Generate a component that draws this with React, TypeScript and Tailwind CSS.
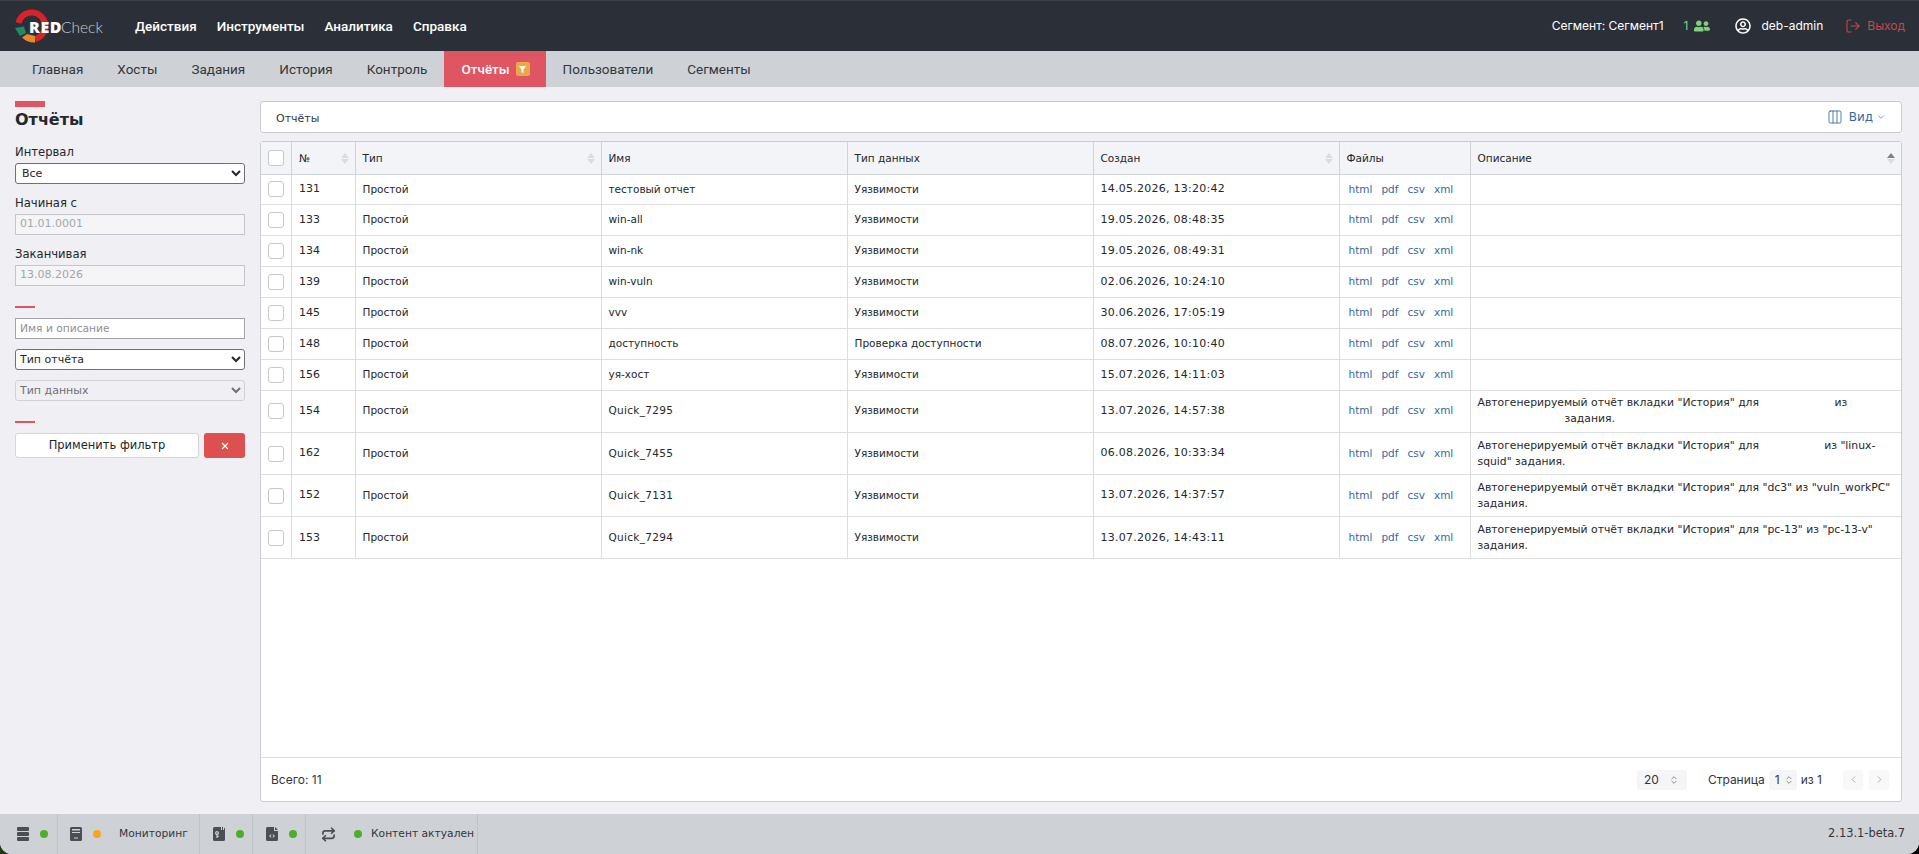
import { ChevronDown, ChevronLeft, ChevronRight, ChevronsUpDown, Columns3, LogOut, Repeat, X } from 'lucide-react';
import { FaRegUserCircle, FaUserFriends } from 'react-icons/fa';

const TOP_MENU = ['Действия', 'Инструменты', 'Аналитика', 'Справка'];
const TABS = ['Главная', 'Хосты', 'Задания', 'История', 'Контроль', 'Отчёты', 'Пользователи', 'Сегменты'];

type Report = {
  id: number;
  name: string;
  dataType?: string;
  created: string;
  desc?: [string, string];
  tall?: boolean;
  indent?: boolean;
};

const AUTO = 'Автогенерируемый отчёт вкладки "История" для';
const GAP_LONG = '\u00a0'.repeat(22);
const GAP_SHORT = '\u00a0'.repeat(19);

const REPORTS: Report[] = [
  { id: 131, name: 'тестовый отчет', created: '14.05.2026, 13:20:42' },
  { id: 133, name: 'win-all', created: '19.05.2026, 08:48:35' },
  { id: 134, name: 'win-nk', created: '19.05.2026, 08:49:31' },
  { id: 139, name: 'win-vuln', created: '02.06.2026, 10:24:10' },
  { id: 145, name: 'vvv', created: '30.06.2026, 17:05:19' },
  { id: 148, name: 'доступность', dataType: 'Проверка доступности', created: '08.07.2026, 10:10:40' },
  { id: 156, name: 'уя-хост', created: '15.07.2026, 14:11:03' },
  { id: 154, name: 'Quick_7295', created: '13.07.2026, 14:57:38', tall: true, indent: true, desc: [`${AUTO}${GAP_LONG}из`, 'задания.'] },
  { id: 162, name: 'Quick_7455', created: '06.08.2026, 10:33:34', tall: true, desc: [`${AUTO}${GAP_SHORT}из "linux-`, 'squid" задания.'] },
  { id: 152, name: 'Quick_7131', created: '13.07.2026, 14:37:57', tall: true, desc: [`${AUTO} "dc3" из "vuln_workPC"`, 'задания.'] },
  { id: 153, name: 'Quick_7294', created: '13.07.2026, 14:43:11', tall: true, desc: [`${AUTO} "pc-13" из "pc-13-v"`, 'задания.'] },
];

function Logo() {
  return (
    <div className="relative h-[36px] w-[90px] shrink-0">
      <svg viewBox="0 0 34 36" className="absolute left-0 top-0 h-[36px] w-[34px]">
        <path d="M3.500 15 A13.500 13.500 0 1 1 20 31" fill="none" stroke="#d8232a" strokeWidth="6" />
        <path d="M0 20 L9 18.500 L11 25 L5 28 Z" fill="#1e8a68" />
        <path d="M12 26 L20 28 L20 34.500 A17 17 0 0 1 7 29.500 Z" fill="#e8872e" />
      </svg>
      <span className="absolute left-[14px] top-[9px] font-['Open_Sans',sans-serif] text-[16px] font-extrabold leading-[20px] tracking-[0.6px] text-white">RED</span>
      <span className="absolute left-[46px] top-[9px] font-['Lato',sans-serif] text-[15.5px] font-light leading-[20px] text-[#c8cad0]">Check</span>
    </div>
  );
}

function SortArrows({ up }: { up?: boolean }) {
  return (
    <span className="ml-auto flex flex-col gap-[1px]">
      <span className={`h-0 w-0 border-x-[4px] border-b-[5px] border-x-transparent ${up ? 'border-b-[#7d838c]' : 'border-b-[#d9dce1]'}`} />
      <span className="h-0 w-0 border-x-[4px] border-t-[5px] border-x-transparent border-t-[#d9dce1]" />
    </span>
  );
}

function Checkbox() {
  return <span className="mx-auto block h-[16px] w-[16px] rounded-[3px] border border-[#c4c7cc] bg-white" />;
}

function HeadCell({ label, sort, up, wide }: { label: string; sort?: boolean; up?: boolean; wide?: boolean }) {
  return (
    <th className={`border-l border-[#d0d3d8] pr-[6px] pt-[2px] text-left font-normal ${wide ? 'pl-[7.5px]' : 'pl-[7px]'}`}>
      <div className="flex items-center">
        <span>{label}</span>
        {sort ? <SortArrows up={up} /> : null}
      </div>
    </th>
  );
}

function FileLinks() {
  return (
    <div className="flex gap-[9px] pl-[2px] text-[#35699c]">
      <span>html</span>
      <span>pdf</span>
      <span>csv</span>
      <span>xml</span>
    </div>
  );
}

function Sidebar() {
  return (
    <aside className="w-[260px] shrink-0 px-[15px] pt-[14px] text-[#24272b]">
      <div className="h-[6px] w-[30px] bg-[#df5561]" />
      <h1 className="mt-[1px] text-[16px] font-bold leading-[24px]">Отчёты</h1>
      <label className="mt-[11px] block text-[11.6px] leading-[18px]">Интервал</label>
      <select defaultValue="Все" className="mt-[2px] block h-[21px] w-full rounded-[3px] border border-[#6f7175] bg-white pl-[2px] text-[11px] text-[#24272b]">
        <option>Все</option>
      </select>
      <label className="mt-[10px] block text-[11.6px] leading-[18px]">Начиная с</label>
      <div className="mt-[2px] flex h-[21px] items-center border border-[#c4c6cb] bg-[#f5f5f8] px-[4px] text-[11px] text-[#a4a6ab]">01.01.0001</div>
      <label className="mt-[10px] block text-[11.6px] leading-[18px]">Заканчивая</label>
      <div className="mt-[2px] flex h-[21px] items-center border border-[#c4c6cb] bg-[#f5f5f8] px-[4px] text-[11px] text-[#a4a6ab]">13.08.2026</div>
      <div className="mt-[20px] h-[2px] w-[20px] bg-[#df5561]" />
      <input placeholder="Имя и описание" className="mt-[10px] block h-[21px] w-full border border-[#a3a5aa] bg-white px-[4px] text-[10.7px] placeholder:text-[#8e9095]" />
      <select defaultValue="Тип отчёта" className="mt-[10px] block h-[21px] w-full rounded-[3px] border border-[#6f7175] bg-white text-[11px] text-[#24272b]">
        <option>Тип отчёта</option>
      </select>
      <select disabled defaultValue="Тип данных" className="mt-[10px] block h-[21px] w-full rounded-[3px] border border-[#d0d2d6] bg-[#efeff4] text-[11px] text-[#6f7175]">
        <option>Тип данных</option>
      </select>
      <div className="mt-[20px] h-[2px] w-[20px] bg-[#df5561]" />
      <div className="mt-[10px] flex gap-[5px]">
        <button type="button" className="h-[25px] w-[184px] rounded-[3px] border border-[#d4d6da] bg-white text-[11.5px] text-[#24272b]">Применить фильтр</button>
        <button type="button" className="flex h-[25px] w-[41px] items-center justify-center rounded-[3px] bg-[#dc5050] text-white">
          <X size={10} strokeWidth={3} />
        </button>
      </div>
    </aside>
  );
}

function ReportsTable() {
  return (
    <table className="w-full table-fixed border-collapse text-[10.5px] text-[#24272b]">
      <colgroup>
        <col className="w-[30px]" />
        <col className="w-[64px]" />
        <col className="w-[246px]" />
        <col className="w-[246px]" />
        <col className="w-[246px]" />
        <col className="w-[246px]" />
        <col className="w-[131px]" />
        <col />
      </colgroup>
      <thead>
        <tr className="h-[32px] border-b border-[#d0d3d8] bg-[#f3f4f8]">
          <th className="font-normal"><Checkbox /></th>
          <HeadCell label="№" sort wide />
          <HeadCell label="Тип" sort />
          <HeadCell label="Имя" />
          <HeadCell label="Тип данных" />
          <HeadCell label="Создан" sort />
          <HeadCell label="Файлы" />
          <HeadCell label="Описание" sort up />
        </tr>
      </thead>
      <tbody>
        {REPORTS.map((r) => (
          <tr key={r.id} className={`border-b border-[#dcdee2] ${r.tall ? 'h-[42.2px]' : 'h-[30.9px]'}`}>
            <td><Checkbox /></td>
            <td className="border-l border-[#dcdee2] pl-[7.5px] pr-[7px] text-[11px]">{r.id}</td>
            <td className="border-l border-[#dcdee2] px-[7px]">Простой</td>
            <td className={`border-l border-[#dcdee2] px-[7px] ${r.tall ? 'tracking-[0.3px]' : ''}`}>{r.name}</td>
            <td className="border-l border-[#dcdee2] px-[7px]">{r.dataType ?? 'Уязвимости'}</td>
            <td className="border-l border-[#dcdee2] px-[7px] text-[11px] tracking-[0.25px]">{r.created}</td>
            <td className="border-l border-[#dcdee2] px-[7px]"><FileLinks /></td>
            <td className="border-l border-[#dcdee2] px-[7px] text-[10.8px] leading-[16px]">
              {r.desc ? (
                <>
                  <div className="whitespace-nowrap">{r.desc[0]}</div>
                  <div className={r.indent ? 'pl-[87px]' : ''}>{r.desc[1]}</div>
                </>
              ) : null}
            </td>
          </tr>
        ))}
      </tbody>
    </table>
  );
}

function Dot({ color }: { color: string }) {
  return <span className={`block h-[8px] w-[8px] shrink-0 rounded-full ${color}`} />;
}

function StatusBar() {
  return (
    <footer className="flex h-[40px] shrink-0 items-center bg-[#ced2d6] text-[10.7px] text-[#33363a]">
      <div className="flex h-full w-[58px] items-center gap-[11px] border-r border-[#bfc3c8] pl-[17px]">
        <svg viewBox="0 0 12 14" className="h-[14px] w-[12px] shrink-0 fill-[#4b4e55]">
          <rect width="12" height="4" rx="1" />
          <rect y="5" width="12" height="4" rx="1" />
          <rect y="10" width="12" height="4" rx="1" />
        </svg>
        <Dot color="bg-[#4caf2a]" />
      </div>
      <div className="flex h-full w-[142px] items-center border-r border-[#bfc3c8] pl-[12px]">
        <svg viewBox="0 0 12 14" className="h-[14px] w-[12px] shrink-0 fill-[#4b4e55]">
          <path d="M1.500 0h9A1.500 1.500 0 0 1 12 1.500v11a1.500 1.500 0 0 1-1.500 1.500h-9A1.500 1.500 0 0 1 0 12.500v-11A1.500 1.500 0 0 1 1.500 0zM2 2v1.500h8V2zM2 5v1h8V5zM4 10.500v1h4v-1z" fillRule="evenodd" />
        </svg>
        <span className="ml-[11px]"><Dot color="bg-[#f5a623]" /></span>
        <span className="ml-[18px]">Мониторинг</span>
      </div>
      <div className="flex h-full w-[53px] items-center gap-[11px] border-r border-[#bfc3c8] pl-[13px]">
        <svg viewBox="0 0 12 14" className="h-[14px] w-[12px] shrink-0 fill-[#4b4e55]">
          <path d="M1.500 0H8v3h1V0h1v3h1V.4A1.500 1.500 0 0 1 12 1.500v11a1.500 1.500 0 0 1-1.500 1.500h-9A1.500 1.500 0 0 1 0 12.500v-11A1.500 1.500 0 0 1 1.500 0zM4 4a2 2 0 0 0-.6 3.900V11h1.200V9.800H6V8.700H4.600v-.8A2 2 0 0 0 4 4zm0 1.200a.8.8 0 1 1 0 1.600.8.800 0 0 1 0-1.600z" fillRule="evenodd" />
        </svg>
        <Dot color="bg-[#4caf2a]" />
      </div>
      <div className="flex h-full w-[53px] items-center gap-[11px] border-r border-[#bfc3c8] pl-[13px]">
        <svg viewBox="0 0 12 14" className="h-[14px] w-[12px] shrink-0 fill-[#4b4e55]">
          <path d="M1.500 0H8v4h4v8.500a1.500 1.500 0 0 1-1.500 1.500h-9A1.500 1.500 0 0 1 0 12.500v-11A1.500 1.500 0 0 1 1.500 0zM9 0l3 3H9zM5 7.200 3 9l2 1.800.6-.6L4.300 9l1.300-1.200zM7 7.200l-.6.600L7.700 9l-1.300 1.200.6.600L9 9z" fillRule="evenodd" />
        </svg>
        <Dot color="bg-[#4caf2a]" />
      </div>
      <div className="flex h-full w-[172px] items-center border-r border-[#bfc3c8] pl-[15px]">
        <Repeat size={15} strokeWidth={2.8} className="shrink-0 text-[#4b4e55]" />
        <span className="ml-[18px]"><Dot color="bg-[#4caf2a]" /></span>
        <span className="ml-[9px] whitespace-nowrap">Контент актуален</span>
      </div>
      <span className="ml-auto pr-[14px] text-[11.4px]">2.13.1-beta.7</span>
    </footer>
  );
}

export default function App() {
  return (
    <div className="h-[854px] w-[1919px] overflow-hidden bg-linear-to-r from-[#1b3a12] to-black font-['DejaVu_Sans',sans-serif]">
      <div className="flex h-full flex-col overflow-hidden rounded-b-[12px] bg-[#efeff4]">
        <header className="flex h-[51px] shrink-0 items-center border-t border-[#3c4048] bg-[#2b2f38] pl-[15px] pr-[14px] font-['Inter',sans-serif] text-[12px] text-white">
          <Logo />
          <nav className="ml-[30px] flex gap-[20px] font-['Roboto',sans-serif] text-[13.5px] font-medium">
            {TOP_MENU.map((item) => (
              <span key={item}>{item}</span>
            ))}
          </nav>
          <span className="ml-auto">Сегмент: Сегмент1</span>
          <span className="ml-[20px] text-[#7fd07f]">1</span>
          <FaUserFriends size={16} className="ml-[6px] text-[#7fd07f]" />
          <FaRegUserCircle size={16} className="ml-[25px]" />
          <span className="ml-[10px]">deb-admin</span>
          <LogOut size={16} strokeWidth={1.6} className="ml-[22px] text-[#c9454e]" />
          <span className="ml-[6px] text-[#c9454e]">Выход</span>
        </header>
        <nav className="flex h-[36px] shrink-0 bg-[#ced2d6] pl-[15px] font-['Roboto',sans-serif] text-[13.5px] text-[#33363a]">
          {TABS.map((tab) =>
            tab === 'Отчёты' ? (
              <span key={tab} className="flex items-center gap-[6px] bg-[#df5561] pl-[17px] pr-[16px] font-medium text-white">
                {tab}
                <span className="flex h-[14px] w-[14px] items-center justify-center rounded-[2px] bg-[#e9a94b]">
                  <svg viewBox="0 0 10 10" className="h-[9px] w-[9px] fill-white"><path d="M1 1h8L6 5v4L4 8V5z" /></svg>
                </span>
              </span>
            ) : (
              <span key={tab} className="flex items-center px-[17px]">{tab}</span>
            ),
          )}
        </nav>
        <main className="flex min-h-0 flex-1">
          <Sidebar />
          <div className="flex min-w-0 flex-1 flex-col pb-[12px] pr-[17px] pt-[14px]">
            <div className="flex h-[32px] shrink-0 items-center rounded-[3px] border border-[#c9ccd0] bg-white pl-[15px] pr-[15px] text-[11px] text-[#33363a]">
              <span className="pt-[5px]">Отчёты</span>
              <Columns3 size={16} strokeWidth={1.3} className="ml-auto text-[#35699c]" />
              <span className="ml-[6px] text-[12px] text-[#35699c]">Вид</span>
              <ChevronDown size={10} className="ml-[3px] text-[#7b8a99]" />
            </div>
            <div className="mt-[8px] flex min-h-0 flex-1 flex-col rounded-[3px] border border-[#c9ccd0] bg-white">
              <div className="min-h-0 flex-1">
                <ReportsTable />
              </div>
              <div className="flex h-[44px] shrink-0 items-center border-t border-[#dcdee2] pl-[10px] pr-[12px] font-['Inter',sans-serif] text-[12px] text-[#33363a]">
                <span>Всего: 11</span>
                <div className="ml-auto flex h-[20px] w-[50px] items-center justify-between rounded-[3px] bg-[#f5f5f7] pl-[7px] pr-[8px]">
                  20
                  <ChevronsUpDown size={10} className="text-[#6f7175]" />
                </div>
                <span className="ml-[21px]">Страница</span>
                <div className="ml-[4px] flex h-[20px] w-[28px] items-center justify-between rounded-[3px] bg-[#f5f5f7] pl-[6px] pr-[3px]">
                  1
                  <ChevronsUpDown size={10} className="text-[#6f7175]" />
                </div>
                <span className="ml-[4px]">из 1</span>
                <div className="ml-[21px] flex h-[20px] w-[20px] items-center justify-center rounded-[3px] bg-[#f8f8f9]">
                  <ChevronLeft size={11} className="text-[#a9abb0]" />
                </div>
                <div className="ml-[6px] flex h-[20px] w-[20px] items-center justify-center rounded-[3px] bg-[#f8f8f9]">
                  <ChevronRight size={11} className="text-[#a9abb0]" />
                </div>
              </div>
            </div>
          </div>
        </main>
        <StatusBar />
      </div>
    </div>
  );
}
